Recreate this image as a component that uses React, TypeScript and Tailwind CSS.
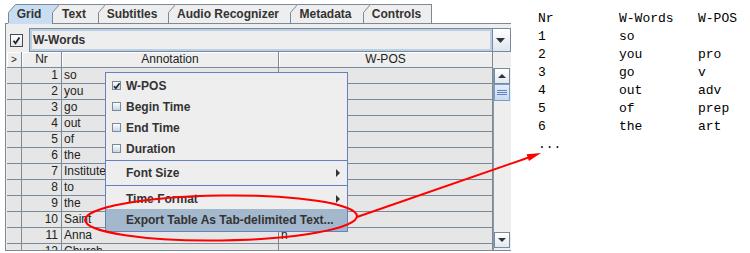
import React from "react";

const tabs = [
  { label: "Grid", w: "w-[44px]", px: 44, sel: true },
  { label: "Text", w: "w-[46px]", px: 46 },
  { label: "Subtitles", w: "w-[70px]", px: 70 },
  { label: "Audio Recognizer", w: "w-[122px]", px: 122 },
  { label: "Metadata", w: "w-[73px]", px: 73 },
  { label: "Controls", w: "w-[69px]", px: 69, last: true },
];

const rows = [
  { n: 1, a: "so", p: "" },
  { n: 2, a: "you", p: "pro" },
  { n: 3, a: "go", p: "v" },
  { n: 4, a: "out", p: "adv" },
  { n: 5, a: "of", p: "prep" },
  { n: 6, a: "the", p: "art" },
  { n: 7, a: "Institute", p: "" },
  { n: 8, a: "to", p: "" },
  { n: 9, a: "the", p: "" },
  { n: 10, a: "Saint", p: "" },
  { n: 11, a: "Anna", p: "n" },
  { n: 12, a: "Church", p: "" },
];

const exportRows = [
  ["Nr", "W-Words", "W-POS"],
  ["1", "so", ""],
  ["2", "you", "pro"],
  ["3", "go", "v"],
  ["4", "out", "adv"],
  ["5", "of", "prep"],
  ["6", "the", "art"],
];

function Tab({ label, w, px, sel, last }: { label: string; w: string; px: number; sel?: boolean; last?: boolean }) {
  const ext = last ? 0 : 7;
  const W = px + ext;
  return (
    <div className={`relative h-[19px] ${w} flex items-center justify-center pr-[2px] text-[12px] font-bold text-[#333]`}>
      <svg className="absolute left-0 top-0 overflow-visible" width={W} height={19}>
        <polygon points={`0,19 0,8.5 7.5,0 ${W},0 ${W},19`} fill={sel ? "#c8ddf2" : "#eeeeee"} />
        <polyline points={`0.5,19 0.5,8.5 7.5,0.5 ${W},0.5`} fill="none" stroke="#7a8a99" strokeWidth="1" />
        {last && <line x1={px - 0.5} y1={0.5} x2={px - 0.5} y2={19} stroke="#7a8a99" strokeWidth="1" />}
      </svg>
      <span className="relative">{label}</span>
    </div>
  );
}

function MenuCheck({ checked }: { checked?: boolean }) {
  return (
    <svg width="10" height="10" viewBox="0 0 10 10">
      <defs>
        <linearGradient id="mcg" x1="0" y1="0" x2="0" y2="1">
          <stop offset="0" stopColor="#ffffff" />
          <stop offset="1" stopColor="#c4d3e4" />
        </linearGradient>
      </defs>
      <rect x="0.5" y="0.5" width="8" height="8" fill="url(#mcg)" stroke="#7a8a99" />
      {checked && <path d="M2 5.2 L3.8 7.2 L7.6 2.2" fill="none" stroke="#222" strokeWidth="1.6" />}
    </svg>
  );
}

function MenuItem({ label, icon, checked, sub, hl, h }: { label: string; icon?: boolean; checked?: boolean; sub?: boolean; hl?: boolean; h: string }) {
  return (
    <div className={`${h} shrink-0 flex items-center ${hl ? "bg-[#a3b8cc]" : ""}`}>
      <div className="w-[20px] pl-[6px] flex items-center">{icon && <MenuCheck checked={checked} />}</div>
      <span className="flex-1 leading-none">{label}</span>
      {sub && (
        <svg width="5" height="8" viewBox="0 0 5 8" className="mr-[6px]">
          <polygon points="0,0 4,4 0,8" fill="#333" />
        </svg>
      )}
    </div>
  );
}

function ScrollBtn({ up }: { up?: boolean }) {
  return (
    <div className="h-[16px] w-[16px] border border-[#7a8a99] bg-gradient-to-b from-[#ffffff] to-[#e2e9f1] flex items-center justify-center">
      <svg width="8" height="4" viewBox="0 0 8 4">
        {up ? <polygon points="0,4 4,0 8,4" fill="#333" /> : <polygon points="0,0 8,0 4,4" fill="#333" />}
      </svg>
    </div>
  );
}

export default function App() {
  return (
    <div className="relative w-[750px] h-[253px] bg-white overflow-hidden flex font-['Liberation_Sans',Arial,sans-serif] text-[#333]">
      {/* Left: Java panel */}
      <div className="w-[511px] shrink-0 pl-[5px] pt-[4px] flex flex-col">
        <div className="flex pl-[3px] h-[19px]">
          {tabs.map((t) => (
            <Tab key={t.label} {...t} />
          ))}
        </div>
        <div className="h-px flex">
          <div className="w-[3px] bg-[#7a8a99]" />
          <div className="w-[44px] bg-[#c8ddf2]" />
          <div className="flex-1 bg-[#7a8a99]" />
        </div>
        <div className="h-[227px] border-l border-b border-[#7a8a99] bg-[#eeeeee] flex flex-col">
          {/* combo row */}
          <div className="mt-[4px] h-[24px] flex items-center pl-[4px]">
            <svg width="13" height="13" viewBox="0 0 13 13" className="shrink-0">
              <defs>
                <linearGradient id="cbg" x1="0" y1="0" x2="0" y2="1">
                  <stop offset="0" stopColor="#ffffff" />
                  <stop offset="1" stopColor="#dfe7f0" />
                </linearGradient>
              </defs>
              <rect x="0.5" y="0.5" width="12" height="12" fill="url(#cbg)" stroke="#4a4a4a" />
              <path d="M3.5 6.8 L5.5 9.3 L9.5 3.5" fill="none" stroke="#222" strokeWidth="1.8" />
            </svg>
            <div className="ml-[6px] flex-1 h-[24px] flex">
              <div className="flex-1 border border-[#7a8a99] shadow-[inset_0_0_0_2px_#b8cfe5] flex items-center pl-[3px] text-[12px] font-bold text-[#333]">
                W-Words
              </div>
              <div className="w-[18px] border border-l-0 border-[#7a8a99] bg-gradient-to-b from-[#ffffff] to-[#dde6f0] flex items-center justify-center pr-[3px]">
                <svg width="9" height="5" viewBox="0 0 9 5">
                  <polygon points="0,0 9,0 4.5,5" fill="#333" />
                </svg>
              </div>
            </div>
          </div>

          {/* table */}
          <div className="h-[198px] pl-[1px] flex flex-col overflow-hidden text-[12px] text-[#222]">
            {/* header */}
            <div className="h-[16px] flex shrink-0">
              <div className="w-[15px] border-r border-b border-[#7a8a99] shadow-[inset_1px_1px_0_#ffffff] flex items-center justify-center text-[10px] leading-none">&gt;</div>
              <div className="w-[40px] border-r border-b border-[#7a8a99] shadow-[inset_1px_1px_0_#ffffff] flex items-center justify-center leading-[15px]">Nr</div>
              <div className="w-[217px] border-r border-b border-[#7a8a99] shadow-[inset_1px_1px_0_#ffffff] flex items-center justify-center leading-[15px]">Annotation</div>
              <div className="w-[214px] border-r border-b border-[#7a8a99] shadow-[inset_1px_1px_0_#ffffff] flex items-center justify-center leading-[15px]">W-POS</div>
              <div className="flex-1" />
            </div>
            {/* body */}
            <div className="flex-1 flex min-h-0">
              <div className="w-[486px] flex flex-col overflow-hidden">
                {rows.map((r) => (
                  <div key={r.n} className="h-[16px] shrink-0 flex bg-[#e6e6e6]">
                    <div className="w-[15px] border-r border-b border-[#7a8a99]" />
                    <div className="w-[40px] border-r border-b border-[#7a8a99] text-right pr-[3px] leading-[15px]">{r.n}</div>
                    <div className="w-[217px] border-r border-b border-[#7a8a99] pl-[2px] leading-[15px] overflow-hidden whitespace-nowrap">{r.a}</div>
                    <div className="w-[214px] border-r border-b border-[#7a8a99] pl-[2px] leading-[15px]">{r.p}</div>
                  </div>
                ))}
              </div>
              <div className="w-[18px] border-l border-[#8a97a5] bg-[#eeeeee] flex flex-col pb-[2px]">
                <ScrollBtn up />
                <div className="h-[17px] w-[16px] border border-[#7b9bd1] bg-gradient-to-b from-[#e4eef9] to-[#c8dbef] flex flex-col items-center justify-center gap-[1px]">
                  <div className="w-[10px] h-px bg-[#6382bf]" />
                  <div className="w-[10px] h-px bg-[#6382bf]" />
                  <div className="w-[10px] h-px bg-[#6382bf]" />
                </div>
                <div className="flex-1" />
                <ScrollBtn />
              </div>
            </div>
          </div>
        </div>
      </div>

      {/* Right: exported text */}
      <div className="pl-[27px] pt-[10px] font-['Liberation_Mono','Courier_New',monospace] text-[13px] leading-[18px] text-black">
        <div className="grid grid-cols-[81px_79px_auto]">
          {exportRows.map((r, i) => (
            <React.Fragment key={i}>
              <span className="whitespace-pre">{r[0]}</span>
              <span className="whitespace-pre">{r[1]}</span>
              <span className="whitespace-pre">{r[2]}</span>
            </React.Fragment>
          ))}
        </div>
        <div>...</div>
      </div>

      {/* Popup menu */}
      <div className="absolute left-[105px] top-[72px] w-[243px] h-[160px] border border-[#6382bf] bg-[#eeeeee] pt-[2px] flex flex-col text-[12px] font-bold text-[#333]">
        <MenuItem h="h-[21px]" icon checked label="W-POS" />
        <MenuItem h="h-[21px]" icon label="Begin Time" />
        <MenuItem h="h-[21px]" icon label="End Time" />
        <MenuItem h="h-[21px]" icon label="Duration" />
        <div className="h-[3px] pt-px shrink-0">
          <div className="h-px bg-[#6382bf]" />
        </div>
        <MenuItem h="h-[21px]" label="Font Size" sub />
        <div className="h-[5px] pt-[2px] shrink-0">
          <div className="h-px bg-[#6382bf]" />
        </div>
        <MenuItem h="h-[21px]" label="Time Format" sub />
        <MenuItem h="h-[22px]" label="Export Table As Tab-delimited Text..." hl />
      </div>

      {/* Annotation overlay: ellipse + arrow */}
      <svg className="absolute left-0 top-0 pointer-events-none" width="750" height="253">
        <ellipse cx="221" cy="218" rx="136" ry="22.5" fill="none" stroke="#ff0000" strokeWidth="2" transform="rotate(-0.8 221 218)" />
        <line x1="357" y1="217" x2="530" y2="157" stroke="#ff0000" strokeWidth="2" />
        <polygon points="541,153 528.9,160.9 526.6,154.3" fill="#ff0000" />
      </svg>
    </div>
  );
}
